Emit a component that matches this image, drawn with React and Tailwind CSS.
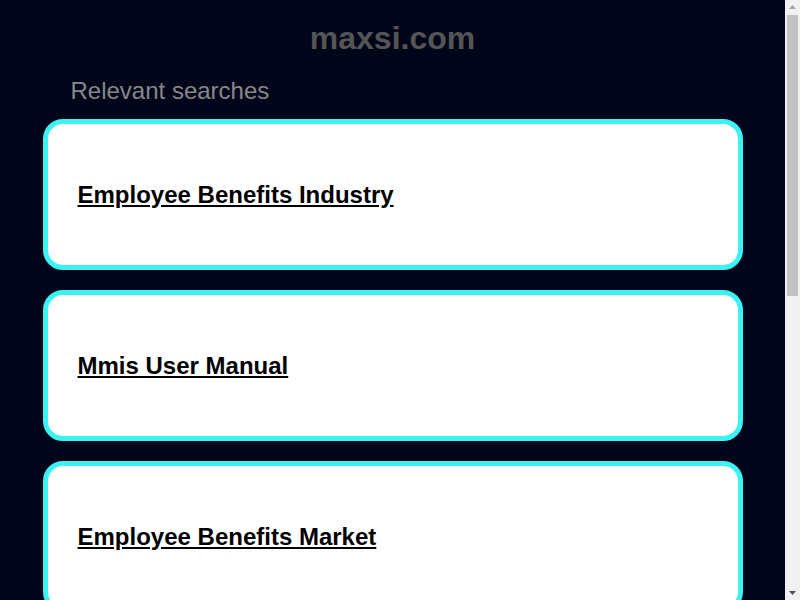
import React from 'react'

const searches = [
  'Employee Benefits Industry',
  'Mmis User Manual',
  'Employee Benefits Market',
  'Employee Benefits Software',
  'Mmis Provider Portal',
  'Employee Benefits Consulting',
]

function Scrollbar() {
  return (
    <div className="w-[15px] shrink-0 bg-[#f1f1f1] flex flex-col items-center">
      <svg width="15" height="15" viewBox="0 0 15 15" className="shrink-0">
        <path d="M4 9 L7.5 5 L11 9 Z" fill="#a3a3a3" />
      </svg>
      <div className="w-[11px] h-[281px] bg-[#c1c1c1]"></div>
      <div className="flex-1"></div>
      <svg width="15" height="15" viewBox="0 0 15 15" className="shrink-0">
        <path d="M4 6 L11 6 L7.5 10 Z" fill="#505050" />
      </svg>
    </div>
  )
}

export default function App() {
  return (
    <div className="h-screen flex overflow-hidden bg-[#01051a] font-['Liberation_Sans',Arial,sans-serif]">
      <main className="flex-1 overflow-hidden pb-10">
        <h1 className="text-center text-[32px] font-bold text-[#555555] leading-[37px] pt-[20px]">maxsi.com</h1>
        <div className="max-w-[700px] mx-auto">
          <h2 className="text-[24px] text-[#888888] leading-[28px] pl-[28px] mt-[20px] mb-[14px]">Relevant searches</h2>
          <div className="flex flex-col gap-5">
            {searches.map(s => (
              <a key={s} href="#"
                className="flex items-center h-[151px] shrink-0 bg-white border-[5px] border-[#3cf3f3] rounded-[20px] px-[30px]">
                <span className="text-[24px] font-bold text-black underline leading-[28px]">{s}</span>
              </a>
            ))}
          </div>
        </div>
      </main>
      <Scrollbar />
    </div>
  )
}
